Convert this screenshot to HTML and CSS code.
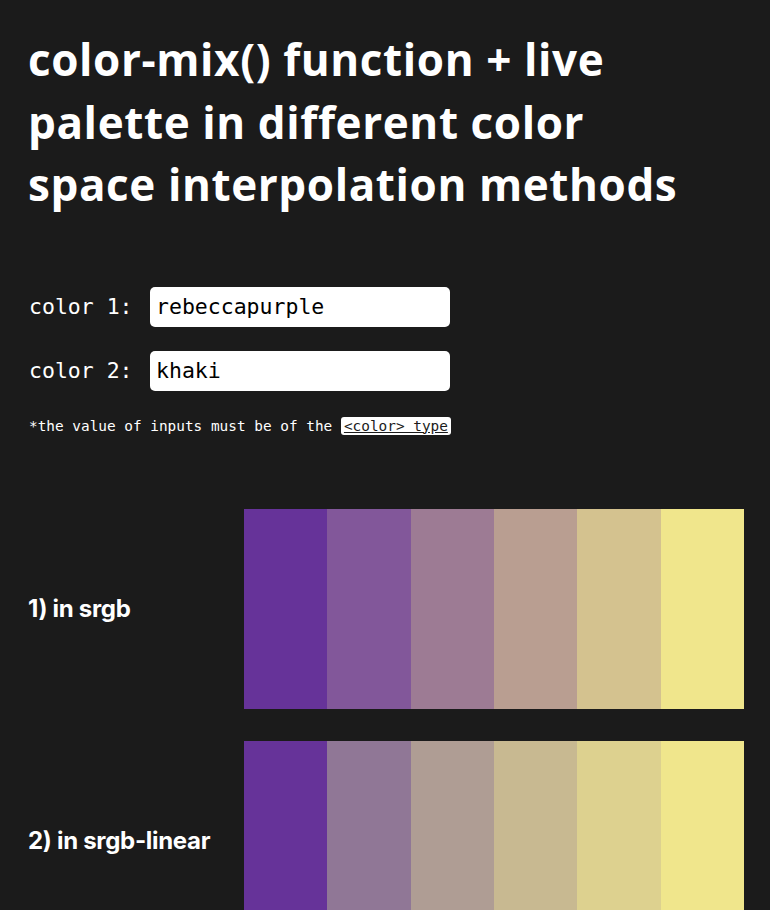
FILE: index.html
```html
<!DOCTYPE html>
<html lang="en">
<head>
<meta charset="utf-8">
<title>color-mix()</title>
<link rel="stylesheet" href="styles.css">
</head>
<body>
<main class="page">
  <h1 class="title"><span class="title-line">color-mix() function + live</span> <span class="title-line">palette in different color</span> <span class="title-line">space interpolation methods</span></h1>
  <form class="inputs">
    <label class="field"><span class="field-label">color 1:</span><input class="field-input" type="text" value="rebeccapurple"></label>
    <label class="field"><span class="field-label">color 2:</span><input class="field-input" type="text" value="khaki"></label>
    <p class="note">*the value of inputs must be of the <a class="note-link" href="#">&lt;color&gt; type</a></p>
  </form>
  <section class="palettes">
    <div class="palette">
      <h2 class="palette-title">1) in srgb</h2>
      <div class="swatches">
        <div class="sw s1a"></div><div class="sw s1b"></div><div class="sw s1c"></div><div class="sw s1d"></div><div class="sw s1e"></div><div class="sw s1f"></div>
      </div>
    </div>
    <div class="palette">
      <h2 class="palette-title">2) in srgb-linear</h2>
      <div class="swatches">
        <div class="sw s2a"></div><div class="sw s2b"></div><div class="sw s2c"></div><div class="sw s2d"></div><div class="sw s2e"></div><div class="sw s2f"></div>
      </div>
    </div>
  </section>
</main>
</body>
</html>
```
FILE: styles.css
```css
html, body { margin: 0; padding: 0; }
body { background: #1b1b1b; color: #fff; font-family: "Open Sans", "Noto Sans", sans-serif; }
.page { padding: 28px 26px 40px 26px; }
.title {
  margin: 0;
  font-family: "Open Sans", sans-serif;
  font-weight: 700;
  font-size: 44px;
  line-height: 62.5px;
  letter-spacing: 0.6px;
  padding-left: 2px;
}
.title-line { display: block; white-space: nowrap; }
.inputs { margin-top: 71px; display: flex; flex-direction: column; }
.field { display: flex; align-items: center; height: 40px; margin-bottom: 24px; }
.field + .field { margin-bottom: 0; }
.field-label {
  font-family: "DejaVu Sans Mono", monospace;
  font-size: 21.5px;
  width: 121px;
  padding-left: 3px;
}
.field-input {
  box-sizing: border-box;
  width: 300px;
  height: 40px;
  border: 0;
  border-radius: 5px;
  background: #fff;
  color: #000;
  font-family: "DejaVu Sans Mono", monospace;
  font-size: 21.5px;
  padding: 0 6px;
  margin: 0;
}
.note {
  margin: 27px 0 0 0;
  padding-left: 3px;
  font-family: "DejaVu Sans Mono", monospace;
  font-size: 14.4px;
}
.note-link {
  color: #1b1b1b;
  background: #fff;
  border-radius: 3px;
  padding: 1px 3px;
}
.palettes { margin-top: 75px; display: flex; flex-direction: column; gap: 32px; }
.palette { display: grid; grid-template-columns: 1fr 500px; align-items: center; }
.palette-title {
  margin: 0;
  padding-left: 2px;
  font-family: Inter, sans-serif;
  font-weight: 700;
  font-size: 24px;
  letter-spacing: -0.3px;
}
.swatches { display: grid; grid-template-columns: repeat(6, 1fr); height: 200px; }
.s1a { background: #663399; }
.s1b { background: #82579a; }
.s1c { background: #9d7b94; }
.s1d { background: #b99e91; }
.s1e { background: #d4c28f; }
.s1f { background: #f0e68c; }
.s2a { background: #663399; }
.s2b { background: #907796; }
.s2c { background: #af9d94; }
.s2d { background: #c8b991; }
.s2e { background: #ddd18f; }
.s2f { background: #f0e68c; }
```
